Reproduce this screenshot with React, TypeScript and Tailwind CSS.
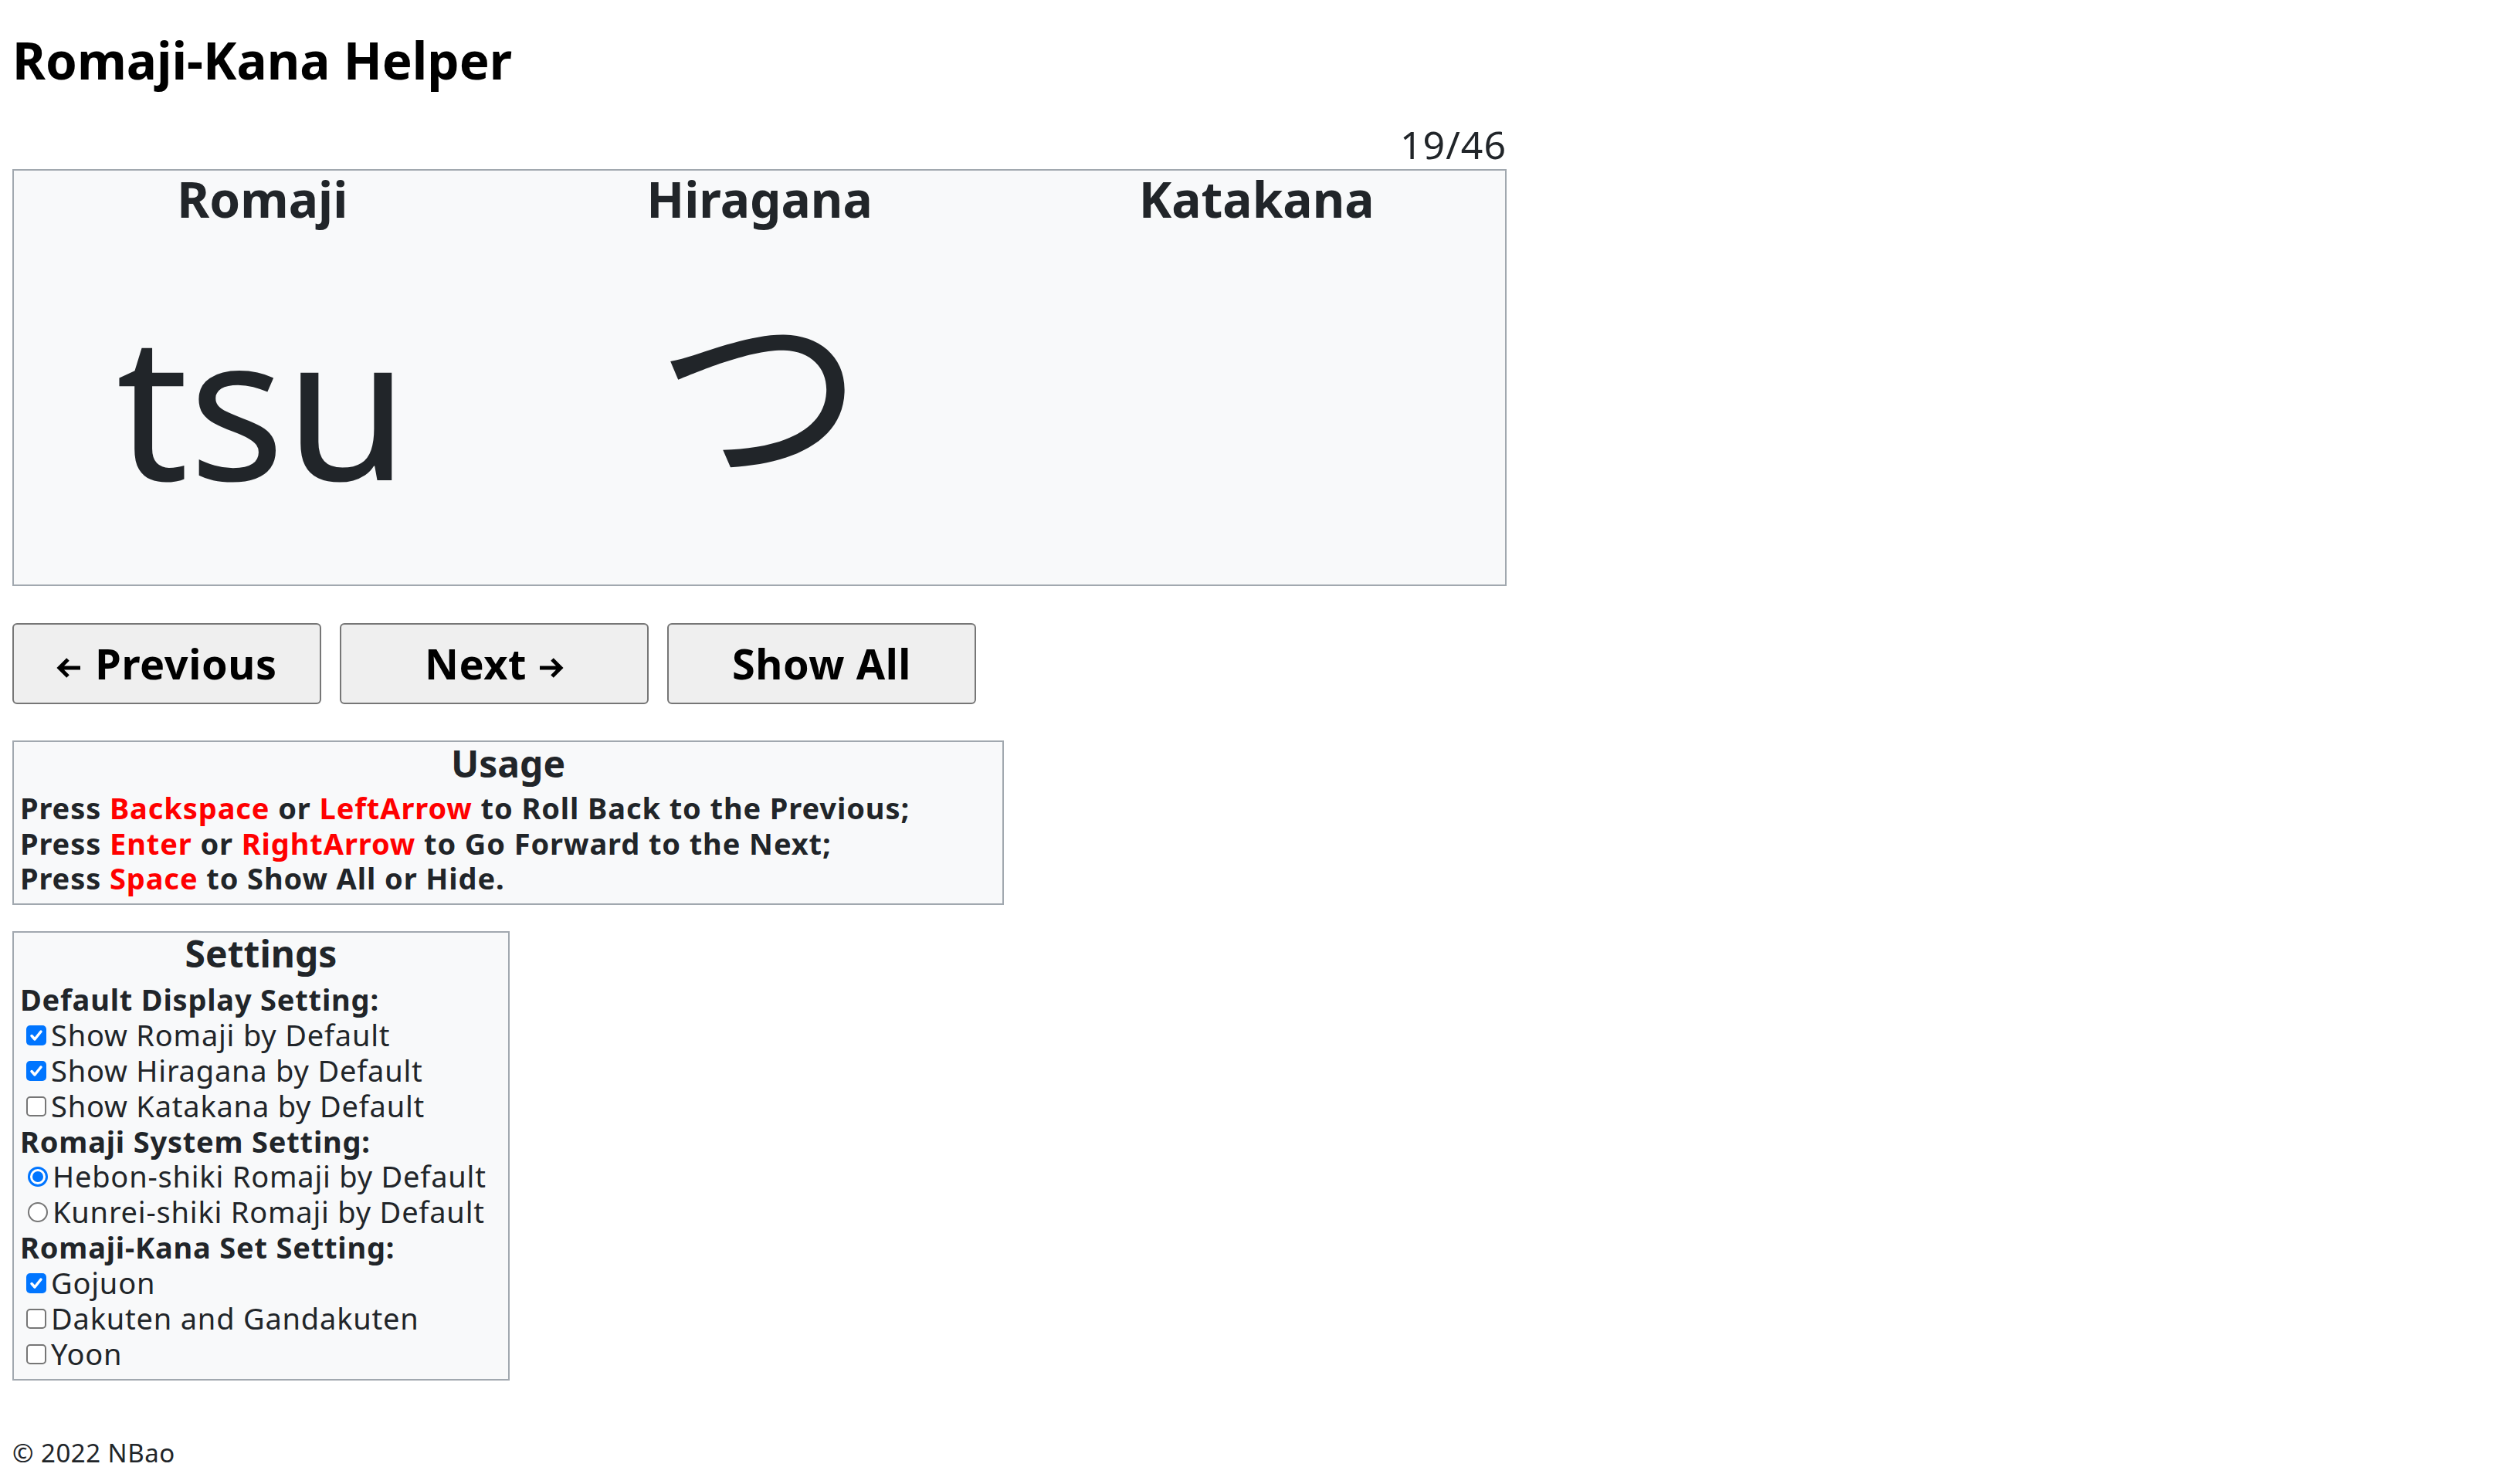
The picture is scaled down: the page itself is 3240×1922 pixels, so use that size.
import { FC } from "react";

const font = "font-['Noto_Sans','Noto_Sans_CJK_JP',sans-serif]";

const CheckBox: FC<{ checked?: boolean }> = ({ checked }) =>
  checked ? (
    <span className="inline-flex items-center justify-center w-[26px] h-[26px] rounded-[5px] bg-[#0075ff] ml-[8px] mr-[6px] shrink-0">
      <svg width="20" height="20" viewBox="0 0 20 20">
        <path d="M4 10.5l4 4.5 8-10" fill="none" stroke="white" strokeWidth="3.5" strokeLinecap="round" strokeLinejoin="round" />
      </svg>
    </span>
  ) : (
    <span className="inline-block w-[26px] h-[26px] rounded-[5px] border-2 border-[#767676] bg-white ml-[8px] mr-[6px] shrink-0" />
  );

const Radio: FC<{ checked?: boolean }> = ({ checked }) =>
  checked ? (
    <span className="inline-flex items-center justify-center w-[26px] h-[26px] rounded-full border-[3px] border-[#0075ff] bg-white ml-[10px] mr-[6px] shrink-0">
      <span className="w-[14px] h-[14px] rounded-full bg-[#0075ff]" />
    </span>
  ) : (
    <span className="inline-block w-[26px] h-[26px] rounded-full border-2 border-[#767676] bg-white ml-[10px] mr-[6px] shrink-0" />
  );

const ArrowLeft = () => (
  <svg width="32" height="30" viewBox="0 0 32 30" className="mt-[10px]">
    <path d="M31 15H5M15 4L4 15l11 11" fill="none" stroke="black" strokeWidth="5" strokeLinejoin="miter" />
  </svg>
);

const ArrowRight = () => (
  <svg width="32" height="30" viewBox="0 0 32 30" className="mt-[10px]">
    <path d="M1 15h26M17 4l11 11-11 11" fill="none" stroke="black" strokeWidth="5" strokeLinejoin="miter" />
  </svg>
);

const Key: FC<{ children: string }> = ({ children }) => <span className="text-[#ff0000]">{children}</span>;

const Row: FC<{ children: React.ReactNode }> = ({ children }) => (
  <div className="flex items-center h-[45.9px] leading-[45.9px]">{children}</div>
);

const btn =
  "w-[400px] h-[105px] flex items-center justify-center border-2 border-[#767676] rounded-[6px] bg-[#efefef] text-[54px] font-bold text-black tracking-[0.6px]";

export default function App() {
  return (
    <div className={`${font} px-4 text-[#212529] bg-white min-h-[1922px]`}>
      <h1 className="pt-[38px] text-[65.5px] leading-[80px] font-bold text-black">Romaji-Kana Helper</h1>

      <div className="w-[1935px] mt-[38px]">
        <div className="text-right text-[50px] leading-[63px] tracking-[1px]">19/46</div>
        <div className="grid grid-cols-3 h-[540px] border-2 border-[#a1a8af] bg-[#f8f9fa]">
          <div className="flex flex-col items-center">
            <h2 className="text-[64px] leading-[74px] font-bold">Romaji</h2>
            <div className="mt-[76px] text-[260px] leading-[300px]">tsu</div>
          </div>
          <div className="flex flex-col items-center">
            <h2 className="text-[64px] leading-[74px] font-bold">Hiragana</h2>
            <div className="mt-[59px] text-[270px] leading-[300px]">つ</div>
          </div>
          <div className="flex flex-col items-center">
            <h2 className="text-[64px] leading-[74px] font-bold">Katakana</h2>
          </div>
        </div>
      </div>

      <div className="flex gap-[24px] mt-[48px]">
        <button className={`${btn} gap-[18px]`}>
          <ArrowLeft />
          <span>Previous</span>
        </button>
        <button className={`${btn} gap-[16px]`}>
          <span>Next</span>
          <ArrowRight />
        </button>
        <button className={btn}>Show All</button>
      </div>

      <div className="w-[1284px] mt-[47px] border-2 border-[#a1a8af] bg-[#f8f9fa] px-[8px] pb-[9px]">
        <h3 className="text-center text-[48px] leading-[55px] mb-[8px] font-bold">Usage</h3>
        <div className="text-[38px] leading-[45.5px] font-bold tracking-[0.9px]">
          <p>
            Press <Key>Backspace</Key> or <Key>LeftArrow</Key> to Roll Back to the Previous;
          </p>
          <p>
            Press <Key>Enter</Key> or <Key>RightArrow</Key> to Go Forward to the Next;
          </p>
          <p>
            Press <Key>Space</Key> to Show All or Hide.
          </p>
        </div>
      </div>

      <div className="w-[644px] mt-[34px] border-2 border-[#a1a8af] bg-[#f8f9fa] px-[8px] pb-[9px] text-[38px] tracking-[0.8px]">
        <h3 className="text-center text-[48px] leading-[53px] font-bold mb-[11.5px] tracking-normal">Settings</h3>
        <Row><span className="font-bold">Default Display Setting:</span></Row>
        <Row><CheckBox checked /><span>Show Romaji by Default</span></Row>
        <Row><CheckBox checked /><span>Show Hiragana by Default</span></Row>
        <Row><CheckBox /><span>Show Katakana by Default</span></Row>
        <Row><span className="font-bold">Romaji System Setting:</span></Row>
        <Row><Radio checked /><span>Hebon-shiki Romaji by Default</span></Row>
        <Row><Radio /><span>Kunrei-shiki Romaji by Default</span></Row>
        <Row><span className="font-bold">Romaji-Kana Set Setting:</span></Row>
        <Row><CheckBox checked /><span>Gojuon</span></Row>
        <Row><CheckBox /><span>Dakuten and Gandakuten</span></Row>
        <Row><CheckBox /><span>Yoon</span></Row>
      </div>

      <footer className="mt-[74px] text-[33px] leading-[40px] tracking-[0.5px]">© 2022 NBao</footer>
    </div>
  );
}
